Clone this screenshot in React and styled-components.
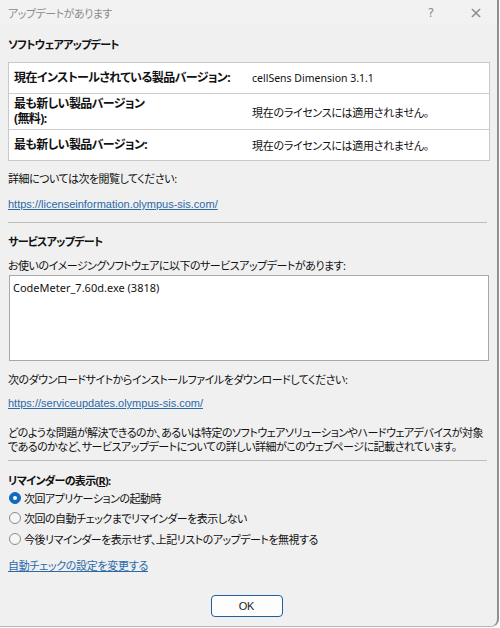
import React from "react";
import styled, { createGlobalStyle } from "styled-components";

const GlobalStyle = createGlobalStyle`
  html, body {
    margin: 0;
    padding: 0;
    background: #ffffff;
  }
  body {
    font-family: "Segoe UI", "Noto Sans", "Noto Sans CJK JP", sans-serif;
    font-size: 11px;
    letter-spacing: -0.5px;
    color: #111111;
    font-feature-settings: "palt";
  }
`;

const Window = styled.div`
  width: 497px;
  height: 626px;
  background: #f0f0f0;
  border-right: 2px solid #8f8f8f;
  border-bottom: 1px solid #b5b5b5;
  border-bottom-right-radius: 8px;
  display: flex;
  flex-direction: column;
  overflow: hidden;
`;

const TitleBar = styled.div`
  height: 25px;
  display: flex;
  align-items: center;
  padding-left: 8px;
  background: #f2f2f2;
`;

const TitleText = styled.div`
  flex: 1;
  color: #8c8c8c;
  font-size: 11px;
`;

const TitleButton = styled.div`
  width: ${(p) => p.$w}px;
  text-align: center;
  color: #8c8c8c;
  font-size: ${(p) => p.$size}px;
  font-family: "Segoe UI", "DejaVu Sans", sans-serif;
  letter-spacing: 0;
`;

const Body = styled.div`
  flex: 1;
  display: flex;
  flex-direction: column;
  padding: 12px 8px 0 8px;
`;

const Heading = styled.div`
  font-weight: bold;
  font-size: 11px;
  letter-spacing: -0.7px;
  line-height: 15px;
  margin: ${(p) => p.$m || "0"};
`;

const Table = styled.div`
  margin-top: 10px;
  background: #ffffff;
  border: 1px solid #c8c8c8;
  width: 480px;
`;

const Row = styled.div`
  display: grid;
  grid-template-columns: 238px 1fr;
  align-items: center;
  height: ${(p) => p.$h}px;
  padding: 0 5px;
  border-top: ${(p) => (p.$first ? "none" : "1px solid #cfcfcf")};
`;

const Label = styled.div`
  font-weight: bold;
  font-size: 12px;
  letter-spacing: -0.6px;
  line-height: 14.5px;
`;

const Value = styled.div`
  font-size: ${(p) => (p.$latin ? "10.5px" : "11px")};
  letter-spacing: ${(p) => (p.$latin ? "0" : "-0.3px")};
`;

const Text = styled.div`
  margin: ${(p) => p.$m || "0"};
  line-height: ${(p) => p.$lh || "15px"};
`;

const Link = styled.a`
  display: block;
  align-self: flex-start;
  color: #2b6aa8;
  text-decoration: underline;
  font-family: "Segoe UI", "Liberation Sans", "Noto Sans CJK JP", sans-serif;
  font-size: 11px;
  letter-spacing: ${(p) => (p.$cjk ? "-0.3px" : "0")};
  line-height: 15px;
  margin: ${(p) => p.$m || "0"};
`;

const Divider = styled.div`
  height: 1px;
  background: #bdbdbd;
  width: 479px;
  margin: ${(p) => p.$m};
`;

const ListBox = styled.div`
  box-sizing: border-box;
  margin: 2px 0 0 1px;
  width: 480px;
  height: 86px;
  background: #ffffff;
  border: 1px solid #a8a8a8;
  padding: 4px 3px;
  line-height: 15px;
  letter-spacing: 0;
`;

const RadioGroup = styled.div`
  display: flex;
  flex-direction: column;
  gap: 5.5px;
  margin-top: 2px;
`;

const RadioRow = styled.label`
  display: flex;
  align-items: center;
  gap: 3px;
  height: 15px;
  padding-left: 1px;
`;

const RadioDot = styled.span`
  width: 12px;
  height: 12px;
  border-radius: 50%;
  box-sizing: border-box;
  flex-shrink: 0;
  background: ${(p) => (p.$on ? "#0f6cbd" : "#f6f6f6")};
  border: 1px solid ${(p) => (p.$on ? "#0f6cbd" : "#8a8a8a")};
  display: flex;
  align-items: center;
  justify-content: center;
  &::after {
    content: "";
    width: 4px;
    height: 4px;
    border-radius: 50%;
    background: #ffffff;
    display: ${(p) => (p.$on ? "block" : "none")};
  }
`;

const Footer = styled.div`
  display: flex;
  justify-content: center;
  margin-top: 21px;
  padding-right: 4px;
`;

const OkButton = styled.button`
  width: 72px;
  height: 22px;
  background: #fdfdfd;
  border: 1px solid #1f5f9e;
  border-radius: 4px;
  font-family: "Segoe UI", "Liberation Sans", sans-serif;
  font-size: 11px;
  letter-spacing: -0.3px;
  color: #1a1a1a;
  padding: 0;
`;

export default function App() {
  return (
    <>
      <GlobalStyle />
      <Window>
        <TitleBar>
          <TitleText>アップデートがあります</TitleText>
          <TitleButton $w={48} $size={12}>?</TitleButton>
          <TitleButton $w={42} $size={16}>×</TitleButton>
        </TitleBar>
        <Body>
          <Heading>ソフトウェアアップデート</Heading>
          <Table>
            <Row $first $h={30}>
              <Label>現在インストールされている製品バージョン:</Label>
              <Value $latin>cellSens Dimension 3.1.1</Value>
            </Row>
            <Row $h={35}>
              <Label>
                最も新しい製品バージョン
                <br />
                (無料):
              </Label>
              <Value>現在のライセンスには適用されません。</Value>
            </Row>
            <Row $h={30}>
              <Label>最も新しい製品バージョン:</Label>
              <Value>現在のライセンスには適用されません。</Value>
            </Row>
          </Table>
          <Text $m="10px 0 0 0">詳細については次を閲覧してください:</Text>
          <Link $m="11px 0 0 0" href="#">https://licenseinformation.olympus-sis.com/</Link>
          <Divider $m="10px 0 0 0" />
          <Heading $m="11px 0 0 0">サービスアップデート</Heading>
          <Text $m="9px 0 0 0">お使いのイメージングソフトウェアに以下のサービスアップデートがあります:</Text>
          <ListBox>CodeMeter_7.60d.exe (3818)</ListBox>
          <Text $m="11px 0 0 0">次のダウンロードサイトからインストールファイルをダウンロードしてください:</Text>
          <Link $m="9px 0 0 0" href="#">https://serviceupdates.olympus-sis.com/</Link>
          <Text $m="15px 0 0 0" $lh="14px">
            どのような問題が解決できるのか、あるいは特定のソフトウェアソリューションやハードウェアデバイスが対象
            <br />
            であるのかなど、サービスアップデートについての詳しい詳細がこのウェブページに記載されています。
          </Text>
          <Divider $m="6px 0 0 0" />
          <Heading $m="12px 0 0 0">
            リマインダーの表示(<u>R</u>):
          </Heading>
          <RadioGroup>
            <RadioRow>
              <RadioDot $on />
              次回アプリケーションの起動時
            </RadioRow>
            <RadioRow>
              <RadioDot />
              次回の自動チェックまでリマインダーを表示しない
            </RadioRow>
            <RadioRow>
              <RadioDot />
              今後リマインダーを表示せず、上記リストのアップデートを無視する
            </RadioRow>
          </RadioGroup>
          <Link $cjk $m="13px 0 0 0" href="#">自動チェックの設定を変更する</Link>
          <Footer>
            <OkButton>OK</OkButton>
          </Footer>
        </Body>
      </Window>
    </>
  );
}
